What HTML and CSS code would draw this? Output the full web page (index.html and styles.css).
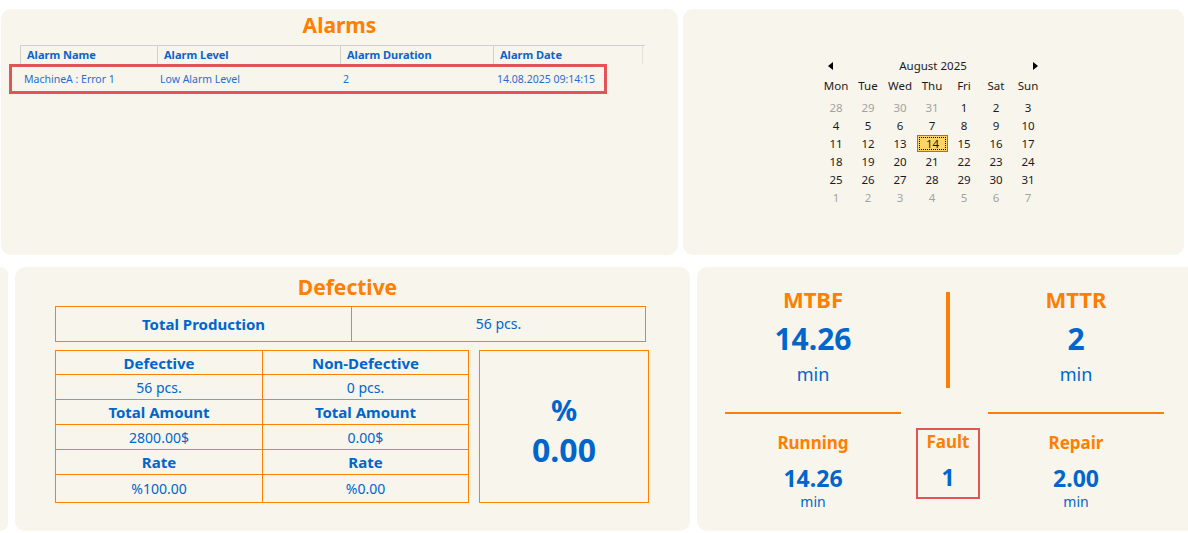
FILE: index.html
```html
<!DOCTYPE html>
<html lang="en">
<head>
<meta charset="utf-8">
<title>Dashboard</title>
<link rel="stylesheet" href="styles.css">
</head>
<body>
<div class="page">
  <div class="row row-top">
    <section class="panel alarms">
      <h2 class="title">Alarms</h2>
      <div class="atable">
        <div class="ahead">
          <div class="hc c1">Alarm Name</div>
          <div class="hc c2">Alarm Level</div>
          <div class="hc c3">Alarm Duration</div>
          <div class="hc c4">Alarm Date</div>
        </div>
        <div class="arow">
          <div class="rc r1">MachineA : Error 1</div>
          <div class="rc r2">Low Alarm Level</div>
          <div class="rc r3">2</div>
          <div class="rc r4">14.08.2025 09:14:15</div>
        </div>
      </div>
    </section>
    <section class="panel calendar">
      <div class="cal">
        <div class="cal-head">
          <span class="arrow arrow-left"></span>
          <span class="month">August 2025</span>
          <span class="arrow arrow-right"></span>
        </div>
        <div class="cal-days">
          <span>Mon</span><span>Tue</span><span>Wed</span><span>Thu</span><span>Fri</span><span>Sat</span><span>Sun</span>
        </div>
        <div class="cal-grid">
          <span class="other">28</span><span class="other">29</span><span class="other">30</span><span class="other">31</span><span>1</span><span>2</span><span>3</span>
          <span>4</span><span>5</span><span>6</span><span>7</span><span>8</span><span>9</span><span>10</span>
          <span>11</span><span>12</span><span>13</span><span class="sel">14</span><span>15</span><span>16</span><span>17</span>
          <span>18</span><span>19</span><span>20</span><span>21</span><span>22</span><span>23</span><span>24</span>
          <span>25</span><span>26</span><span>27</span><span>28</span><span>29</span><span>30</span><span>31</span>
          <span class="other">1</span><span class="other">2</span><span class="other">3</span><span class="other">4</span><span class="other">5</span><span class="other">6</span><span class="other">7</span>
        </div>
      </div>
    </section>
  </div>

  <div class="row row-bottom">
    <div class="panel sliver"></div>
    <section class="panel defective">
      <h2 class="title def-title">Defective</h2>
      <div class="def-body">
        <div class="tp">
          <div class="tp-label">Total Production</div>
          <div class="tp-value">56 pcs.</div>
        </div>
        <div class="lower">
          <div class="dtable">
            <div class="dc dh">Defective</div><div class="dc dh">Non-Defective</div>
            <div class="dc">56 pcs.</div><div class="dc">0 pcs.</div>
            <div class="dc dh">Total Amount</div><div class="dc dh">Total Amount</div>
            <div class="dc">2800.00$</div><div class="dc">0.00$</div>
            <div class="dc dh">Rate</div><div class="dc dh">Rate</div>
            <div class="dc">%100.00</div><div class="dc">%0.00</div>
          </div>
          <div class="pct">
            <div class="pct-sign">%</div>
            <div class="pct-value">0.00</div>
          </div>
        </div>
      </div>
    </section>
    <section class="panel kpi">
      <div class="kpi-top">
        <div class="kblock">
          <div class="k-label">MTBF</div>
          <div class="k-num">14.26</div>
          <div class="k-unit">min</div>
        </div>
        <div class="vline"></div>
        <div class="kblock">
          <div class="k-label">MTTR</div>
          <div class="k-num">2</div>
          <div class="k-unit">min</div>
        </div>
      </div>
      <div class="kpi-lines">
        <div class="hline"></div>
        <div></div>
        <div class="hline"></div>
      </div>
      <div class="kpi-bottom">
        <div class="sblock">
          <div class="s-label">Running</div>
          <div class="s-num">14.26</div>
          <div class="s-unit">min</div>
        </div>
        <div class="fault">
          <div class="s-label">Fault</div>
          <div class="s-num">1</div>
        </div>
        <div class="sblock">
          <div class="s-label">Repair</div>
          <div class="s-num">2.00</div>
          <div class="s-unit">min</div>
        </div>
      </div>
    </section>
  </div>
</div>
</body>
</html>
```

FILE: styles.css
```css
html, body {
  margin: 0;
  padding: 0;
  background: #ffffff;
  overflow: hidden;
}

body {
  font-family: "Noto Sans", "Open Sans", sans-serif;
  color: #0066cc;
  width: 1188px;
  height: 533px;
}

.page {
  padding-top: 9px;
}

.row {
  display: flex;
}

.row-top {
  height: 246px;
  gap: 5px;
  padding-left: 1px;
}

.row-bottom {
  height: 264px;
  gap: 7px;
  margin-top: 12px;
}

.panel {
  background: #f8f5ed;
  border-radius: 10px;
  box-sizing: border-box;
  flex-shrink: 0;
}

.title {
  margin: 0;
  text-align: center;
  color: #ff7f00;
  font-size: 21px;
  font-weight: 700;
  line-height: 28px;
}

/* ---------- Alarms ---------- */
.alarms {
  width: 677px;
  padding-top: 2px;
}

.atable {
  margin-top: 6px;
  margin-left: 19px;
  width: 625px;
}

.ahead {
  display: flex;
  height: 19px;
  border-top: 1px solid #cfcfcf;
  box-sizing: border-box;
}

.hc {
  box-sizing: border-box;
  border-left: 1px solid #cfcfcf;
  padding-left: 6px;
  font-size: 11px;
  font-weight: 700;
  line-height: 18px;
  color: #0a64c8;
  white-space: nowrap;
}

.c1 { width: 137px; }
.c2 { width: 183px; }
.c3 { width: 153px; }
.c4 { width: 150px; border-right: 1px solid #e3e0da; }

.arow {
  display: flex;
  box-sizing: border-box;
  width: 598px;
  height: 30px;
  margin-left: -11px;
  padding-left: 8px;
  border: 3px solid #e35454;
}

.rc {
  box-sizing: border-box;
  font-size: 10.5px;
  line-height: 24px;
  color: #1f6fd0;
  white-space: nowrap;
}

.r1 { width: 137px; padding-left: 4px; }
.r2 { width: 183px; padding-left: 3px; }
.r3 { width: 153px; padding-left: 3px; }
.r4 { flex: 1; padding-left: 4px; }

/* ---------- Calendar ---------- */
.calendar {
  width: 501px;
  display: flex;
  justify-content: center;
  padding-top: 47px;
  padding-right: 3px;
}

.cal {
  width: 224px;
  font-size: 11.5px;
  color: #1b1b1b;
}

.cal-head {
  height: 20px;
  display: flex;
  align-items: center;
  justify-content: space-between;
  padding: 0 6px 0 8px;
}

.month {
  line-height: 20px;
}

.arrow {
  width: 0;
  height: 0;
  border-top: 4px solid transparent;
  border-bottom: 4px solid transparent;
}

.arrow-left { border-right: 5px solid #000; }
.arrow-right { border-left: 5px solid #000; }

.cal-days,
.cal-grid {
  display: grid;
  grid-template-columns: repeat(7, 32px);
  text-align: center;
}

.cal-days {
  height: 20px;
  line-height: 20px;
}

.cal-grid {
  margin-top: 3px;
  grid-auto-rows: 18px;
  line-height: 18px;
}

.cal-grid .other {
  color: #a3a3a3;
}

.cal-grid .sel {
  box-sizing: border-box;
  height: 17px;
  margin-left: 1px;
  line-height: 15px;
  background: #fdd566;
  border: 1px solid #c46c00;
  outline: 1px dotted #000;
  outline-offset: -3px;
}

/* ---------- Defective ---------- */
.sliver {
  width: 8px;
  border-radius: 0 10px 10px 0;
}

.defective {
  width: 675px;
  padding-top: 6px;
}

.def-title {
  padding-right: 10px;
}

.def-body {
  padding-left: 40px;
}

.tp {
  margin-top: 5px;
  width: 591px;
  height: 36px;
  display: flex;
  border: 1px solid #ff7f00;
  box-sizing: border-box;
  font-size: 14px;
  line-height: 34px;
  text-align: center;
}

.tp-label {
  width: 295px;
  border-right: 1px solid #ff7f00;
  font-weight: 700;
  font-size: 15px;
}

.tp-value {
  flex: 1;
}

.lower {
  display: flex;
  gap: 10px;
  margin-top: 8px;
}

.dtable {
  width: 414px;
  box-sizing: border-box;
  display: grid;
  grid-template-columns: 207px 206px;
  grid-template-rows: 24px 25px 25px 25px 25px 28px;
  border-top: 1px solid #ff7f00;
  border-left: 1px solid #ff7f00;
}

.dc {
  border-right: 1px solid #ff7f00;
  border-bottom: 1px solid #ff7f00;
  text-align: center;
  font-size: 14px;
  display: flex;
  align-items: center;
  justify-content: center;
}

.dc.dh {
  font-weight: 700;
  font-size: 15px;
}

.pct {
  width: 170px;
  height: 153px;
  box-sizing: border-box;
  border: 1px solid #ff7f00;
  padding-top: 7px;
  display: flex;
  flex-direction: column;
  align-items: center;
  justify-content: center;
  font-weight: 700;
}

.pct-sign {
  font-size: 29px;
  line-height: 40px;
}

.pct-value {
  font-size: 32px;
  line-height: 40px;
}

/* ---------- KPI ---------- */
.kpi {
  width: 502px;
  padding: 18px 0 0 28px;
}

.kpi-top,
.kpi-lines,
.kpi-bottom {
  display: grid;
  grid-template-columns: 176px 87px 176px;
}

.kblock,
.sblock {
  text-align: center;
}

.k-label {
  color: #ff7f00;
  font-size: 22px;
  font-weight: 700;
  line-height: 28px;
}

.k-num {
  font-size: 30px;
  font-weight: 700;
  line-height: 52px;
}

.k-unit {
  font-size: 18px;
  line-height: 18px;
}

.vline {
  justify-self: center;
  margin-left: 7px;
  margin-top: 7px;
  width: 4px;
  height: 96px;
  background: #ff7f00;
}

.kpi-lines {
  margin-top: 24px;
}

.hline {
  height: 2px;
  background: #ff7f00;
}

.kpi-bottom {
  margin-top: 14px;
}

.sblock {
  padding-top: 3px;
}

.s-label {
  color: #ff7f00;
  font-size: 17px;
  font-weight: 700;
  line-height: 24px;
}

.s-num {
  margin-top: 10px;
  font-size: 23px;
  font-weight: 700;
  line-height: 26px;
}

.s-unit {
  margin-top: 3px;
  font-size: 14px;
  line-height: 16px;
}

.fault {
  justify-self: center;
  margin-left: 7px;
  width: 64px;
  height: 71px;
  box-sizing: border-box;
  border: 2px solid #e35454;
  text-align: center;
}
```
